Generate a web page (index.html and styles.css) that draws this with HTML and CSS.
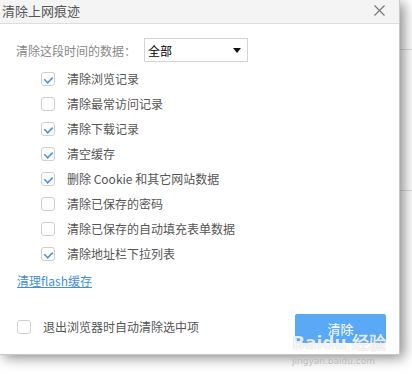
FILE: index.html
```html
<!DOCTYPE html>
<html lang="zh-CN">
<head>
  <meta charset="UTF-8">
  <title>清除上网痕迹</title>
  <link rel="stylesheet" href="styles.css">
</head>
<body>
  <div class="backdrop">
    <div class="dialog">
      <div class="title-bar">
        <span class="title">清除上网痕迹</span>
        <span class="close">
          <svg width="11" height="11" viewBox="0 0 11 11"><path d="M0.5 0.5 L10.5 10.5 M10.5 0.5 L0.5 10.5" stroke="#777" stroke-width="1.2"/></svg>
        </span>
      </div>

      <div class="body">
        <div class="range">
          <span class="range-label">清除这段时间的数据：</span>
          <div class="select">
            <span>全部</span>
            <span class="arrow"></span>
          </div>
        </div>

        <ul class="options">
          <li><span class="box checked"></span>清除浏览记录</li>
          <li><span class="box"></span>清除最常访问记录</li>
          <li><span class="box checked"></span>清除下载记录</li>
          <li><span class="box checked"></span>清空缓存</li>
          <li><span class="box checked"></span>删除 Cookie 和其它网站数据</li>
          <li><span class="box"></span>清除已保存的密码</li>
          <li><span class="box"></span>清除已保存的自动填充表单数据</li>
          <li><span class="box checked"></span>清除地址栏下拉列表</li>
        </ul>

        <a class="flash" href="#">清理flash缓存</a>

        <div class="footer">
          <label class="auto"><span class="box"></span>退出浏览器时自动清除选中项</label>
          <button class="clear">清除</button>
        </div>
      </div>

      <div class="watermark">
        <div class="wm-logo">Bai<span>du</span> 经验</div>
        <div class="wm-url">jingyan.baidu.com</div>
      </div>
    </div>
  </div>
</body>
</html>
```

FILE: styles.css
```css
html, body { margin: 0; padding: 0; }
body {
  font-family: "Noto Sans CJK SC", "Noto Sans", sans-serif;
  background: #fff;
  width: 412px;
  height: 378px;
  overflow: hidden;
}

.backdrop {
  height: 378px;
  background:
    linear-gradient(#ddd, #ddd) 400px 49px / 12px 1px no-repeat,
    linear-gradient(#ddd, #ddd) 400px 190px / 12px 1px no-repeat,
    #fff;
}

.dialog {
  position: relative;
  width: 400px;
  height: 355px;
  background: #fff;
  border-right: 1px solid #c8c8c8;
  border-bottom: 1px solid #c8c8c8;
  box-shadow: 4px 3px 12px rgba(0,0,0,0.45);
  box-sizing: border-box;
}

.title-bar {
  height: 24px;
  background: #f4f4f4;
  border-bottom: 1px solid #ddd;
  box-sizing: border-box;
  display: flex;
  align-items: center;
  justify-content: space-between;
  padding: 0 14px 2px 2px;
}
.title { font-size: 13px; color: #555; line-height: 20px; }
.close { display: flex; }

.body { padding: 14px 0 0 16px; }

.range { display: flex; align-items: center; height: 24px; }
.range-label { font-size: 12px; color: #888; width: 128px; }
.select {
  width: 104px;
  height: 24px;
  box-sizing: border-box;
  border: 1px solid #d4d4d4;
  display: flex;
  align-items: center;
  justify-content: space-between;
  padding: 0 6px 0 3px;
  font-size: 12px;
  color: #000;
}
.arrow {
  width: 0; height: 0;
  border-left: 4px solid transparent;
  border-right: 4px solid transparent;
  border-top: 5px solid #111;
}

.options { list-style: none; margin: 4px 0 0 0; padding: 0 0 0 25px; }
.options li {
  display: flex;
  align-items: center;
  height: 25px;
  font-size: 12px;
  color: #555;
}

.box {
  width: 14px;
  height: 14px;
  box-sizing: border-box;
  border: 1px solid #cfcfcf;
  border-radius: 3px;
  margin-right: 12px;
  position: relative;
  flex: none;
}
.box.checked::after {
  content: "";
  position: absolute;
  left: 3px;
  top: 1px;
  width: 5px;
  height: 8px;
  border-right: 2px solid #4a90e2;
  border-bottom: 2px solid #4a90e2;
  transform: rotate(45deg) scale(0.8);
}

.flash {
  display: inline-block;
  margin-top: 6px;
  margin-left: 1px;
  font-size: 12px;
  color: #3f8ed8;
  text-decoration: underline;
}

.footer {
  display: flex;
  align-items: center;
  justify-content: space-between;
  margin-top: 23px;
  padding-right: 13px;
}
.auto { display: flex; align-items: center; font-size: 12px; color: #555; margin-left: 1px; margin-bottom: 4px; }
.clear {
  width: 91px;
  height: 29px;
  border: none;
  border-radius: 2px;
  background: #5aa9f6;
  color: #fff;
  font-family: inherit;
  font-size: 13px;
}

.watermark {
  position: absolute;
  left: 292px;
  top: 333px;
  color: rgba(255,255,255,0.85);
  text-shadow: 0 0 1px rgba(0,0,0,0.25);
  pointer-events: none;
}
.wm-logo { font-family: "DejaVu Sans", sans-serif; font-size: 17px; font-weight: bold; line-height: 20px; }
.wm-url { font-family: "DejaVu Sans", sans-serif; font-size: 9px; color: #bbb; text-shadow: none; line-height: 12px; margin-top: 2px; }
```
